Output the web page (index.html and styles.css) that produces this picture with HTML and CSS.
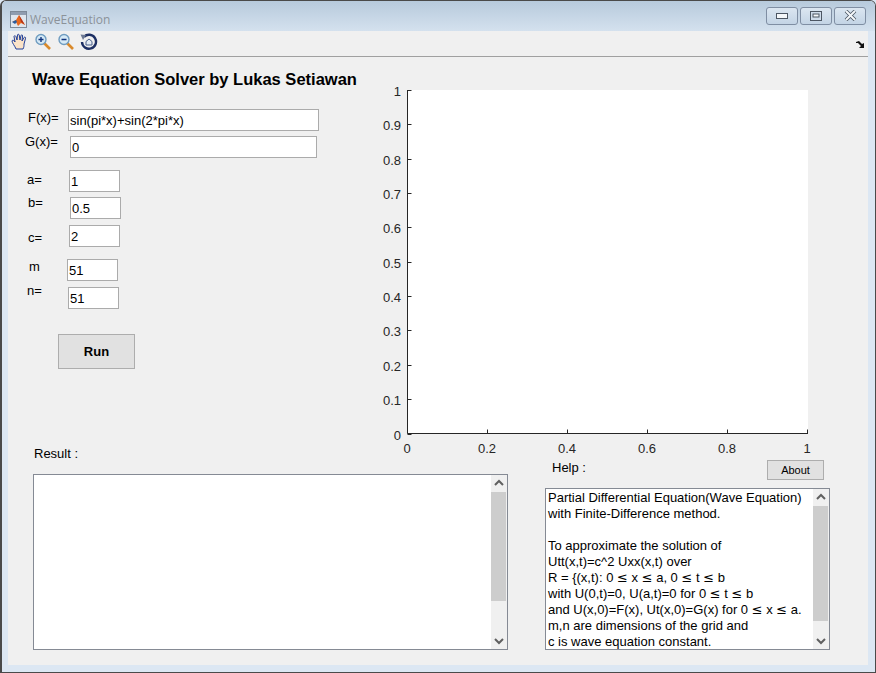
FILE: index.html
```html
<!DOCTYPE html>
<html lang="en">
<head>
    <meta charset="UTF-8">
    <title>WaveEquation</title>
    <link rel="stylesheet" href="styles.css">
</head>
<body>
<div class="window">
    <div class="titlebar">
        <svg class="app-icon" width="17" height="17" viewBox="0 0 17 17">
            <rect x="0.5" y="0.5" width="16" height="16" fill="#dfe6ee" stroke="#7d8a99"/>
            <rect x="1" y="1" width="15" height="3" fill="#8f9db0"/>
            <path d="M2 11 L6 9 L9 4 L12 9 L15 14 L11 12 L8 15 L6 11 Z" fill="#e8681e"/>
            <path d="M2 11 L6 9 L7 11 L5 13 Z" fill="#2a5d9e"/>
            <path d="M9 4 L12 9 L15 14 L11 11 Z" fill="#b5341a"/>
        </svg>
        <span class="title-text">WaveEquation</span>
        <div class="win-buttons">
            <div class="win-btn">
                <svg width="12" height="6" viewBox="0 0 12 6"><rect x="0.5" y="0.5" width="11" height="5" fill="#f4f7fa" stroke="#4c5663"/></svg>
            </div>
            <div class="win-btn">
                <svg width="12" height="10" viewBox="0 0 12 10"><rect x="0.5" y="0.5" width="11" height="9" fill="#cfdceb" stroke="#4c5663"/><rect x="3" y="3" width="6" height="3" fill="#f4f7fa" stroke="#4c5663" stroke-width="1"/></svg>
            </div>
            <div class="win-btn">
                <svg width="13" height="11" viewBox="0 0 13 11"><path d="M2 1 L11 10 M11 1 L2 10" stroke="#4c5663" stroke-width="3.6"/><path d="M2 1 L11 10 M11 1 L2 10" stroke="#f4f7fa" stroke-width="2"/></svg>
            </div>
        </div>
    </div>

    <div class="inner">
        <div class="toolbar">
            <svg width="18" height="18" viewBox="0 0 18 18">
                <path d="M5 16 C4 13 1 10 1 8 C1 7 2.500 7 3.500 8 L4 9 L3 3.500 C3 2.500 4.500 2.500 5 3.500 L6 7 L6.500 2 C6.500 1 8 1 8.200 2 L9 7 L10 2.500 C10.300 1.500 11.800 1.800 11.600 3 L11 8 L13 4.500 C13.500 3.700 15 4.200 14.600 5.200 L13 11 C13 13 13 14 12 16 Z" fill="#fbe3c8" stroke="#1f3f9a" stroke-width="1"/>
            </svg>
            <svg width="18" height="18" viewBox="0 0 18 18">
                <path d="M10 10 L16 16" stroke="#d98a2b" stroke-width="2.600"/>
                <circle cx="7" cy="6.500" r="5" fill="#d6eaf6" stroke="#6f9cc0" stroke-width="1.400"/>
                <path d="M4.500 6.500 H9.500 M7 4 V9" stroke="#12357f" stroke-width="1.400"/>
            </svg>
            <svg width="18" height="18" viewBox="0 0 18 18">
                <path d="M10 10 L16 16" stroke="#d98a2b" stroke-width="2.600"/>
                <circle cx="7" cy="6.500" r="5" fill="#d6eaf6" stroke="#6f9cc0" stroke-width="1.400"/>
                <path d="M4.500 6.500 H9.500" stroke="#12357f" stroke-width="1.400"/>
            </svg>
            <svg width="18" height="18" viewBox="0 0 18 18">
                <path d="M4 3.800 A7 7 0 1 1 2 9" fill="none" stroke="#1d2f63" stroke-width="2.400"/>
                <path d="M0.500 1.500 L6 2 L3 7 Z" fill="#6b7893"/>
                <path d="M6 8.500 L9 6 L12 8.500 V12 H6 Z" fill="#e4ebf3" stroke="#4a5f8a"/>
            </svg>
            <svg class="dock" width="8" height="7" viewBox="0 0 8 7">
                <path d="M0 1 L3 0 L6 3 L8 2 L8 7 L3 7 L5 5 L2 2 L0 2 Z" fill="#111"/>
            </svg>
        </div>

        <div class="top-row">
            <div class="form">
                <h1 class="heading">Wave Equation Solver by Lukas Setiawan</h1>
                <div class="field field-f"><label>F(x)=</label><input class="box box-wide" value="sin(pi*x)+sin(2*pi*x)"></div>
                <div class="field field-g"><label>G(x)=</label><input class="box box-wide2" value="0"></div>
                <div class="field field-a"><label>a=</label><input class="box" value="1"></div>
                <div class="field field-b"><label>b=</label><input class="box" value="0.5"></div>
                <div class="field field-c"><label>c=</label><input class="box" value="2"></div>
                <div class="field field-m"><label>m</label><input class="box" value="51"></div>
                <div class="field field-n"><label>n=</label><input class="box" value="51"></div>
                <button class="run">Run</button>
            </div>
            <svg class="chart" id="chart" width="450" height="380" viewBox="380 80 450 380"></svg>
        </div>

        <div class="bottom-row">
            <div class="result">
                <div class="result-label">Result :</div>
                <div class="textbox result-box">
                    <div class="text"></div>
                    <div class="scrollbar">
                        <svg class="arrow" width="16" height="17" viewBox="0 0 16 17"><path d="M4 10 L8 6 L12 10" fill="none" stroke="#606060" stroke-width="2"/></svg>
                        <div class="thumb thumb-result"></div>
                        <div class="track"></div>
                        <svg class="arrow" width="16" height="17" viewBox="0 0 16 17"><path d="M4 7 L8 11 L12 7" fill="none" stroke="#606060" stroke-width="2"/></svg>
                    </div>
                </div>
            </div>
            <div class="help">
                <div class="help-head">
                    <span class="help-label">Help :</span>
                    <button class="about">About</button>
                </div>
                <div class="textbox help-box">
                    <div class="text">Partial Differential Equation(Wave Equation)<br>with Finite-Difference method.<br><br>To approximate the solution of<br>Utt(x,t)=c^2 Uxx(x,t) over<br>R = {(x,t): 0 <span class="le">≤</span> x <span class="le">≤</span> a, 0 <span class="le">≤</span> t <span class="le">≤</span> b<br>with U(0,t)=0, U(a,t)=0 for 0 <span class="le">≤</span> t <span class="le">≤</span> b<br>and U(x,0)=F(x), Ut(x,0)=G(x) for 0 <span class="le">≤</span> x <span class="le">≤</span> a.<br>m,n are dimensions of the grid and<br>c is wave equation constant.</div>
                    <div class="scrollbar">
                        <svg class="arrow" width="16" height="17" viewBox="0 0 16 17"><path d="M4 10 L8 6 L12 10" fill="none" stroke="#606060" stroke-width="2"/></svg>
                        <div class="thumb thumb-help"></div>
                        <div class="track"></div>
                        <svg class="arrow" width="16" height="17" viewBox="0 0 16 17"><path d="M4 7 L8 11 L12 7" fill="none" stroke="#606060" stroke-width="2"/></svg>
                    </div>
                </div>
            </div>
        </div>
    </div>
</div>

<script>
    // axes: plot area 407..808 x 90..433
    const NS = 'http://www.w3.org/2000/svg';
    const chart = document.getElementById('chart');
    const x0 = 407.5, x1 = 808, y0 = 433.5, y1 = 90;

    function add(tag, attrs, text) {
        const el = document.createElementNS(NS, tag);
        for (const k in attrs) el.setAttribute(k, attrs[k]);
        if (text !== undefined) el.textContent = text;
        chart.appendChild(el);
    }

    add('rect', {x: x0, y: y1, width: x1 - x0, height: y0 - y1, fill: '#fff'});
    add('path', {d: `M${x0} ${y1} V${y0} H${x1}`, fill: 'none', stroke: '#262626'});

    for (let i = 0; i <= 10; i++) {
        const y = Math.round(y0 - i * (y0 - y1) / 10) + 0.5;
        add('path', {d: `M${x0} ${y} h4`, stroke: '#262626'});
        add('text', {x: 401, y: y + 5, 'text-anchor': 'end', class: 'tick'}, String(i / 10));
    }
    for (let i = 0; i <= 5; i++) {
        const x = Math.round(x0 + i * (x1 - x0) / 5) - 0.5;
        add('path', {d: `M${x} ${y0} v-4`, stroke: '#262626'});
        add('text', {x: x - 0.5, y: 453, 'text-anchor': 'middle', class: 'tick'}, String(i / 5));
    }
</script>
</body>
</html>
```

FILE: styles.css
```css
* {
    box-sizing: border-box;
}

html, body {
    margin: 0;
    background: #dce7f3;
}

body {
    font-family: "Liberation Sans", Arial, sans-serif;
    font-size: 13px;
    color: #000;
}

.window {
    width: 876px;
    height: 673px;
    display: flex;
    flex-direction: column;
    overflow: hidden;
    border: 1px solid #4a4a4a;
    border-left-width: 2px;
    border-radius: 6px 6px 0 0;
    background: #dce7f3;
}

.titlebar {
    height: 30px;
    flex: none;
    display: flex;
    align-items: center;
    padding-left: 8px;
    padding-top: 7px;
    background: linear-gradient(#b7cadc, #d4e1ee);
}

.app-icon {
    flex: none;
}

.title-text {
    margin-left: 3px;
    font-family: "Open Sans", sans-serif;
    font-size: 12px;
    color: #8b9299;
}

.win-buttons {
    margin-left: auto;
    margin-right: 9px;
    margin-top: -8px;
    display: flex;
    gap: 2px;
}

.win-btn {
    width: 32px;
    height: 18px;
    display: flex;
    align-items: center;
    justify-content: center;
    border: 1px solid #7f8ea3;
    border-radius: 3px;
    background: linear-gradient(#dbe6f1, #c3d4e5);
}

.inner {
    width: 860px;
    height: 634px;
    margin-left: 6px;
    background: #f0f0f0;
    flex: none;
}

.toolbar {
    height: 26px;
    display: flex;
    align-items: flex-start;
    gap: 5px;
    padding: 2px 0 0 3px;
    border-bottom: 1px solid #a0a0a0;
}

.dock {
    margin-left: auto;
    margin-right: 4px;
    margin-top: 8px;
}

.top-row {
    height: 389px;
    display: flex;
}

.form {
    width: 372px;
    flex: none;
}

.heading {
    margin: 13px 0 0 24px;
    font-size: 16.5px;
    line-height: 18px;
    font-weight: bold;
    white-space: nowrap;
}

.field {
    display: flex;
    height: 22px;
}

.field label {
    height: 15px;
    line-height: 15px;
    flex: none;
}

.box {
    width: 51px;
    height: 22px;
    padding: 0 1px;
    border: 1px solid #ababab;
    background: #fff;
    font: inherit;
    color: #000;
    outline: none;
}

.box-wide {
    width: 251px;
}

.box-wide2 {
    width: 247px;
}

/* the controls are hand placed in the figure, so every row is a bit off */
.field-f { margin-top: 21px; }
.field-f label { margin: 1px 0 0 20px; width: 40px; }

.field-g { margin-top: 5px; }
.field-g label { margin: -2px 0 0 17px; width: 45px; }

.field-a { margin-top: 12px; }
.field-a label { margin: 2px 0 0 19px; width: 42px; }

.field-b { margin-top: 5px; }
.field-b label { margin: -2px 0 0 20px; width: 42px; }

.field-c { margin-top: 6px; }
.field-c label { margin: 5px 0 0 20px; width: 41px; }

.field-m { margin-top: 12px; }
.field-m label { margin: 0 0 0 21px; width: 38px; }

.field-n { margin-top: 6px; }
.field-n label { margin: -4px 0 0 19px; width: 41px; }

.run {
    display: block;
    width: 77px;
    height: 35px;
    margin: 25px 0 0 50px;
    padding: 0;
    border: 1px solid #adadad;
    background: #e1e1e1;
    font: bold 13px "Liberation Sans", Arial, sans-serif;
    color: #000;
}

.chart {
    flex: none;
    margin-top: 23px;
    overflow: visible;
}

.tick {
    font-family: "Liberation Sans", Arial, sans-serif;
    font-size: 13px;
    fill: #262626;
}

.bottom-row {
    display: flex;
}

.result {
    width: 475px;
    margin-left: 25px;
    flex: none;
}

.result-label {
    height: 28px;
    padding-left: 1px;
    line-height: 15px;
}

.textbox {
    display: flex;
    border: 1px solid #858a94;
    background: #fff;
    overflow: hidden;
}

.result-box {
    height: 176px;
}

.help-box {
    height: 162px;
}

.text {
    flex: 1;
    min-width: 0;
    padding: 1px 0 0 2px;
    line-height: 16px;
    white-space: nowrap;
    overflow: hidden;
}

/* the wider sign from the reference */
.le {
    font-family: "DejaVu Sans", sans-serif;
    line-height: 1;
}

.scrollbar {
    width: 16px;
    flex: none;
    display: flex;
    flex-direction: column;
    background: #f0f0f0;
}

.arrow {
    display: block;
    flex: none;
}

.track {
    flex: 1;
}

.thumb {
    width: 15px;
    flex: none;
    background: #cdcdcd;
}

.thumb-result {
    height: 109px;
}

.thumb-help {
    height: 115px;
}

.help {
    width: 285px;
    margin-left: 37px;
    margin-top: 14px;
    flex: none;
}

.help-head {
    height: 28px;
    display: flex;
    align-items: flex-start;
}

.help-label {
    padding-left: 7px;
    line-height: 15px;
}

.about {
    width: 57px;
    height: 20px;
    margin-left: auto;
    margin-right: 6px;
    padding: 0;
    border: 1px solid #adadad;
    background: #e1e1e1;
    font: 11px "Liberation Sans", Arial, sans-serif;
    color: #000;
}
```
